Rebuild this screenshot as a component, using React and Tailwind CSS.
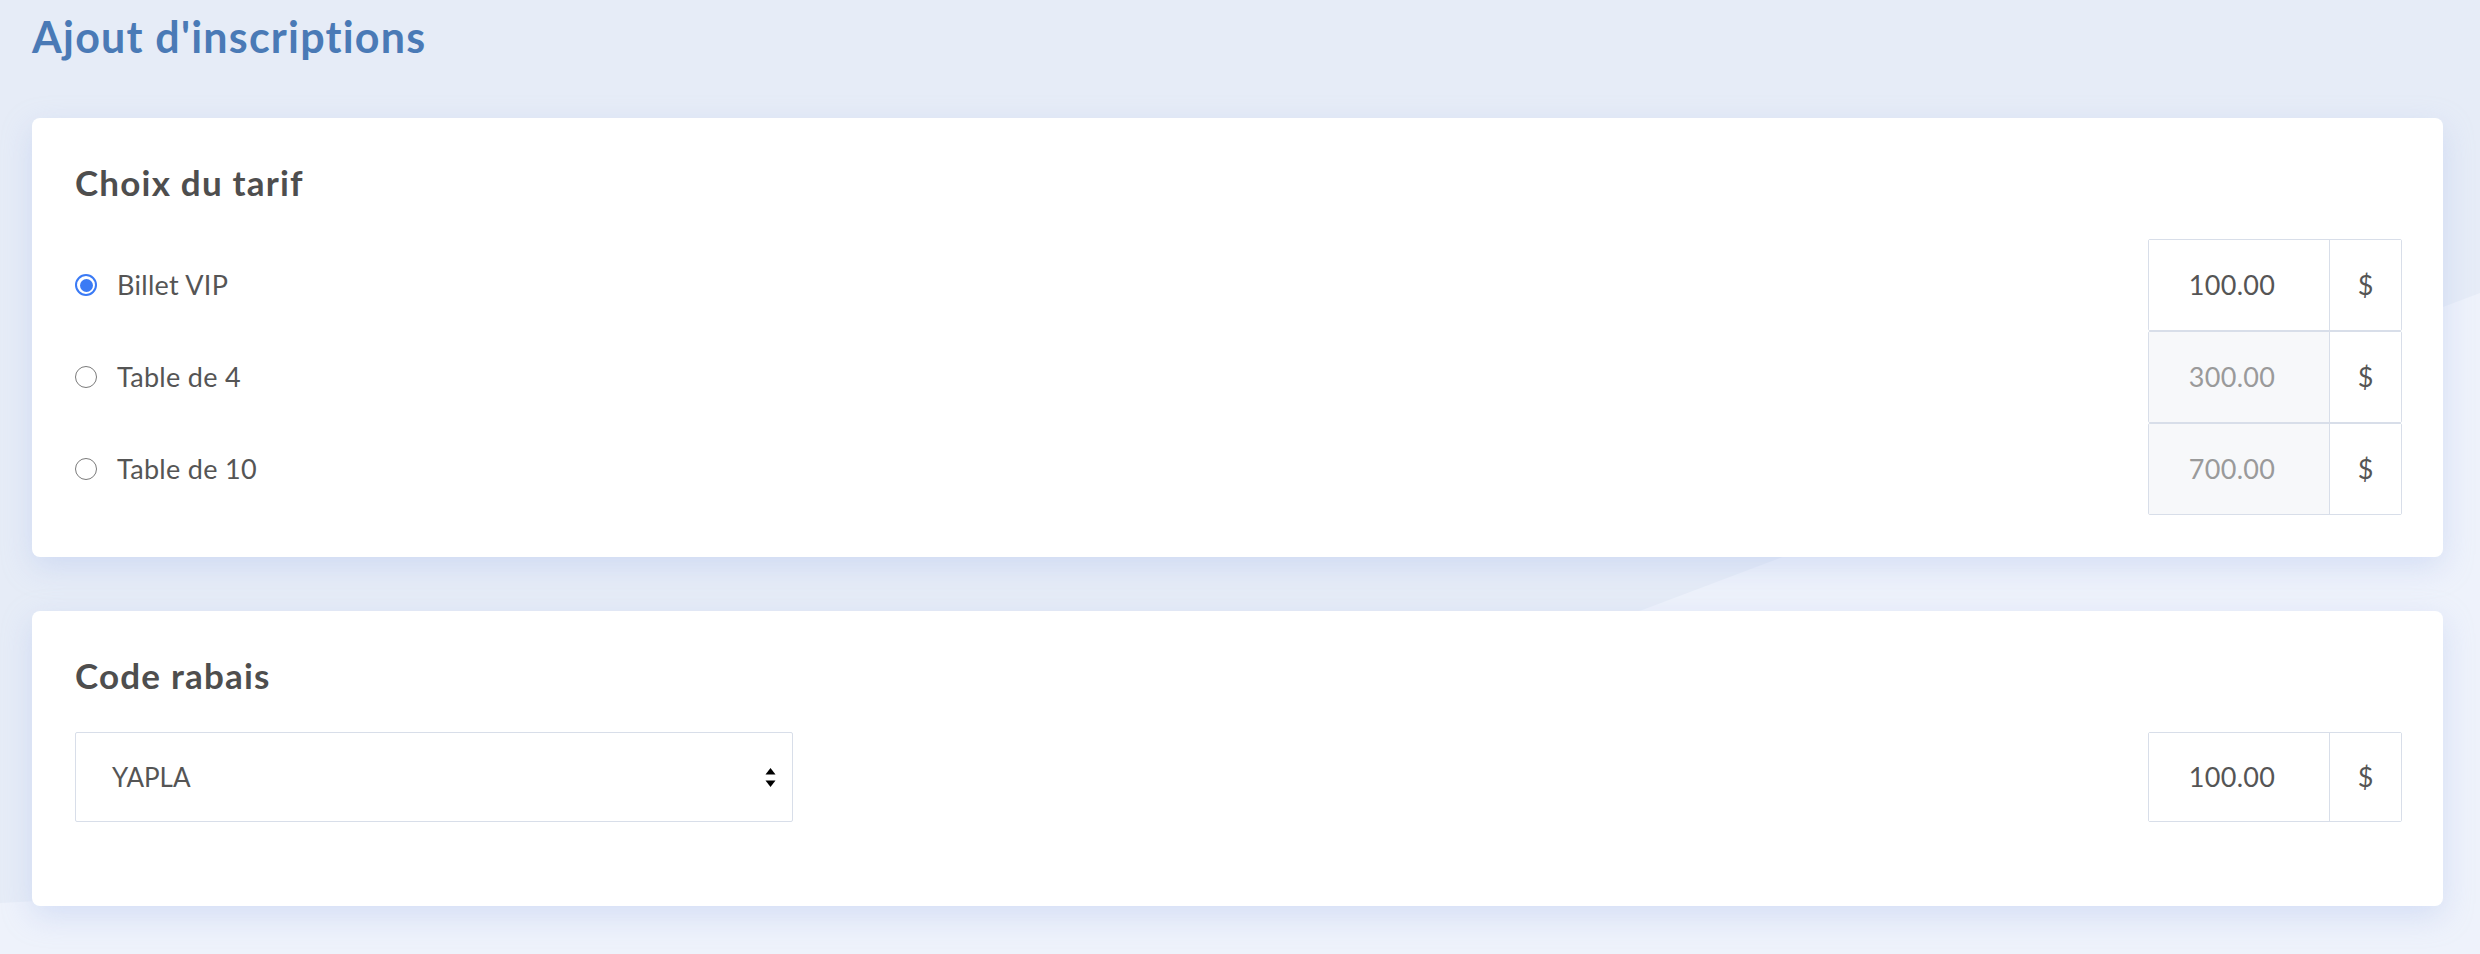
import React from 'react';

const font = { fontFamily: 'Lato, "Open Sans", sans-serif' };

const tarifs = [
  { label: 'Billet VIP', price: '100.00', active: true },
  { label: 'Table de 4', price: '300.00', active: false },
  { label: 'Table de 10', price: '700.00', active: false },
];

const Radio = ({ checked }) =>
  checked ? (
    <span className="w-[22px] h-[22px] rounded-full border-2 border-[#3a7af5] flex items-center justify-center shrink-0">
      <span className="w-[13px] h-[13px] rounded-full bg-[#3a7af5]" />
    </span>
  ) : (
    <span className="w-[22px] h-[22px] rounded-full border-[1.5px] border-[#7a7a7a] bg-white shrink-0" />
  );

const PriceGroup = ({ value, disabled, h = 'h-[92px]' }) => (
  <div className={`flex w-[254px] ${h} border border-[#d8dee9] rounded-[2px]`}>
    <div
      className={`w-[180px] flex items-center justify-center pr-[14px] text-[27px] tracking-[0.3px] ${
        disabled ? 'bg-[#f7f8fa] text-[#9a9a9a]' : 'bg-white text-[#555]'
      }`}
    >
      {value}
    </div>
    <div className="flex-1 flex items-center justify-center border-l border-[#d8dee9] text-[27px] text-[#555] bg-white">
      $
    </div>
  </div>
);

const Card = ({ title, children, bottom }) => (
  <div className={`bg-white rounded-[8px] pl-[43px] pr-[41px] pt-[47px] ${bottom} shadow-[0_10px_30px_rgba(165,185,235,0.35)]`}>
    <h2 className="text-[35px] leading-none font-bold tracking-[1.2px] text-[#4e4e4e] mb-[39px]">{title}</h2>
    {children}
  </div>
);

export default function App() {
  return (
    <div className="relative min-h-[954px] bg-[#e6ecf7] overflow-hidden" style={font}>
      {/* background shape */}
      <svg className="absolute inset-0 w-full h-full" viewBox="0 0 2480 954" preserveAspectRatio="none">
        <path d="M0 903 Q 900 860 1645 609 L 2480 293 L 2480 954 L 0 954 Z" fill="#eef2fb" />
      </svg>

      <div className="relative pl-[32px] pr-[37px] pt-[15px]">
        <h1 className="text-[43px] leading-none font-bold tracking-[1.2px] text-[#4a7ab6] mb-[60px]">Ajout d'inscriptions</h1>

        <div className="flex flex-col gap-[54px]">
          <Card title="Choix du tarif" bottom="pb-[42px]">
            <div className="flex flex-col">
              {tarifs.map((t) => (
                <div key={t.label} className="flex items-center justify-between">
                  <label className="flex items-center gap-[20px] text-[27px] tracking-[0.3px] text-[#555]">
                    <Radio checked={t.active} />
                    {t.label}
                  </label>
                  <PriceGroup value={t.price} disabled={!t.active} />
                </div>
              ))}
            </div>
          </Card>

          <Card title="Code rabais" bottom="pb-[84px]">
            <div className="flex items-center justify-between">
              <div className="w-[718px] h-[90px] border border-[#d8dee9] rounded-[2px] flex items-center justify-between pl-[36px] pr-[16px] text-[26px] text-[#555]">
                <span>YAPLA</span>
                <svg width="11" height="19" viewBox="0 0 11 19">
                  <path d="M5.5 0 L10.5 6.5 L0.5 6.5 Z" fill="#000" />
                  <path d="M5.5 19 L10.5 12.5 L0.5 12.5 Z" fill="#000" />
                </svg>
              </div>
              <PriceGroup value="100.00" h="h-[90px]" />
            </div>
          </Card>
        </div>
      </div>
    </div>
  );
}
